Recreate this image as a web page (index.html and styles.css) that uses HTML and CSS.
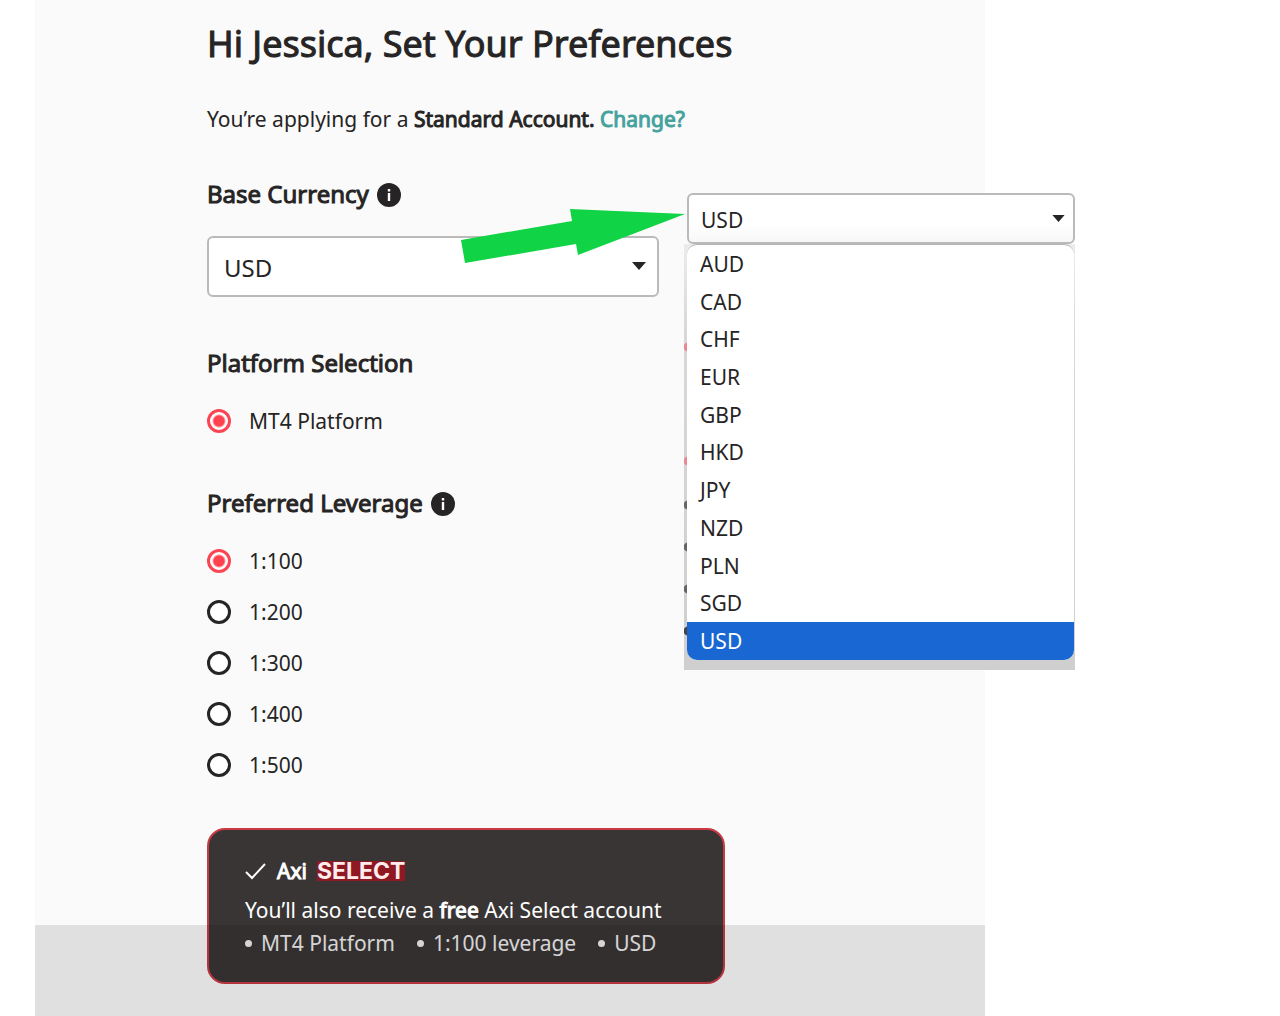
FILE: index.html
```html
<!DOCTYPE html>
<html lang="en">
<head>
    <meta charset="UTF-8">
    <meta name="viewport" content="width=device-width, initial-scale=1.0">
    <title>Set Your Preferences</title>
    <link rel="stylesheet" href="styles.css">
</head>
<body>

<main class="panel">
    <h1>Hi Jessica, Set Your Preferences</h1>
    <p class="intro">You’re applying for a <b>Standard Account.</b> <a href="#change">Change?</a></p>

    <form>
        <section class="currency">
            <h2>
                <label for="currency">Base Currency</label>
                <svg class="info" viewBox="0 0 24 24" aria-hidden="true">
                    <circle cx="12" cy="12" r="12"/>
                    <path d="M10.8 6h2.4v2.4h-2.4zM10.8 10h2.4v8h-2.4z"/>
                </svg>
            </h2>
            <div class="select">
                <select id="currency">
                    <option>USD</option>
                </select>
                <svg class="caret" viewBox="0 0 14 8" aria-hidden="true"><path d="M0 0h14L7 8z"/></svg>
            </div>

            <div class="dropdown">
                <div class="select small">
                    <select id="currencyOpen" aria-label="Currency">
                        <option>USD</option>
                    </select>
                    <svg class="caret" viewBox="0 0 14 8" aria-hidden="true"><path d="M0 0h14L7 8z"/></svg>
                </div>
                <div class="shade">
                    <ul class="options" role="listbox" aria-label="Currencies">
                        <li role="option">AUD</li>
                        <li role="option">CAD</li>
                        <li role="option">CHF</li>
                        <li role="option">EUR</li>
                        <li role="option">GBP</li>
                        <li role="option">HKD</li>
                        <li role="option">JPY</li>
                        <li role="option">NZD</li>
                        <li role="option">PLN</li>
                        <li role="option">SGD</li>
                        <li role="option" class="selected" aria-selected="true">USD</li>
                    </ul>
                </div>
            </div>

            <svg class="arrow" viewBox="0 0 224 54" aria-hidden="true">
                <path d="M0 31L111 12L109 0L224 5L117 46L115 35L4 54z"/>
            </svg>
        </section>

        <section>
            <h2>Platform Selection</h2>
            <div class="radios">
                <label><input type="radio" name="platform" checked> MT4 Platform</label>
            </div>
        </section>

        <section>
            <h2>
                Preferred Leverage
                <svg class="info" viewBox="0 0 24 24" aria-hidden="true">
                    <circle cx="12" cy="12" r="12"/>
                    <path d="M10.8 6h2.4v2.4h-2.4zM10.8 10h2.4v8h-2.4z"/>
                </svg>
            </h2>
            <div class="radios">
                <label><input type="radio" name="leverage" checked> 1:100</label>
                <label><input type="radio" name="leverage"> 1:200</label>
                <label><input type="radio" name="leverage"> 1:300</label>
                <label><input type="radio" name="leverage"> 1:400</label>
                <label><input type="radio" name="leverage"> 1:500</label>
            </div>
        </section>
    </form>

    <div class="card">
        <div class="card-title">
            <svg class="check" viewBox="0 0 22 18" aria-hidden="true"><path d="M1 10l6 6L20 2"/></svg>
            <b>Axi</b>
            <span class="brand">SELECT</span>
        </div>
        <p>You’ll also receive a <b>free</b> Axi Select account</p>
        <ul class="summary">
            <li>MT4 Platform</li>
            <li>1:100 leverage</li>
            <li>USD</li>
        </ul>
    </div>

    <div class="bottom-bar"></div>
</main>

</body>
</html>
```

FILE: styles.css
```css
* {
    box-sizing: border-box;
}
body {
    margin: 0;
    padding-left: 35px;
    background: #fff;
    color: #262424;
    font-family: "Noto Sans", sans-serif;
    font-size: 21px;
    line-height: 32px;
}
h1, h2, p, ul {
    margin: 0;
    padding: 0;
    font-weight: 400;
}
ul {
    list-style: none;
}
.panel {
    position: relative;
    max-width: 950px;
    min-height: 100vh;
    padding: 18px 24px 32px 172px;
    background: #fafafa;
}
h1 {
    font-size: 36px;
    line-height: 52px;
    -webkit-text-stroke: 1px;
}
h2 {
    display: flex;
    align-items: center;
    gap: 8px;
    margin-bottom: 24px;
    font-size: 24px;
    line-height: 36px;
    -webkit-text-stroke: 1px;
}
b, .intro a {
    font-weight: 400;
    -webkit-text-stroke: 1px;
}
.intro {
    margin-top: 33px;
}
.intro a {
    color: #45a29e;
    text-decoration: none;
}
section {
    margin-top: 48px;
}
.currency {
    position: relative;
    margin-top: 41px;
}
.info {
    width: 24px;
    height: 24px;
    margin-top: 2px;
    fill: #262424;
    -webkit-text-stroke: 0;
}
.info path {
    fill: #fff;
}

/* selects */
.select {
    position: relative;
    max-width: 452px;
}
.select select {
    display: block;
    width: 100%;
    height: 61px;
    padding: 2px 15px 0;
    appearance: none;
    border: 2px solid #bcb9b9;
    border-radius: 6px;
    background: #fff;
    color: #262424;
    font: 24px "Noto Sans", sans-serif;
}
.caret {
    position: absolute;
    top: 26px;
    right: 13px;
    width: 14px;
    height: 8px;
    fill: #262424;
}
.small select {
    height: 51px;
    padding: 2px 12px 0;
    background: linear-gradient(#fff 60%, #f7f7f7);
    font-size: 21px;
}
.small .caret {
    top: 22px;
    right: 10px;
    width: 13px;
    height: 7px;
}

/* open currency list */
.dropdown {
    position: absolute;
    top: 17px;
    left: 477px;
    width: 391px;
    padding-left: 3px;
}
/* the radios under the list show at its left edge */
.shade {
    margin-left: -3px;
    padding: 0 1px 10px 3px;
    background:
        radial-gradient(circle at 4px 103px, #e58a90 4px, transparent 5px),
        radial-gradient(circle at 4px 217px, #e58a90 4px, transparent 5px),
        radial-gradient(circle at 4px 261px, #666 4px, transparent 5px),
        radial-gradient(circle at 4px 303px, #666 4px, transparent 5px),
        radial-gradient(circle at 4px 345px, #666 4px, transparent 5px),
        radial-gradient(circle at 4px 387px, #444 4px, transparent 5px),
        linear-gradient(#ececec, #d8d8d8 20%, #cfcfcf);
}
.options {
    display: grid;
    grid-auto-rows: 1fr;
    height: 416px;
    overflow: hidden;
    border-top: 1px solid #b4b2b2;
    border-radius: 10px;
    background: #fff;
}
.options li {
    display: flex;
    align-items: center;
    padding-left: 13px;
}
.options .selected {
    background: #1967d2;
    color: #fff;
}
.arrow {
    position: absolute;
    top: 33px;
    left: 254px;
    width: 224px;
    height: 54px;
    fill: #10d345;
}

/* radios */
.radios {
    display: grid;
    justify-items: start;
    gap: 19px;
}
.radios label {
    display: flex;
    align-items: center;
    gap: 18px;
}
.radios input {
    width: 24px;
    height: 24px;
    margin: 0;
    appearance: none;
    border: 3px solid #262424;
    border-radius: 50%;
    background: #fff;
}
.radios input:checked {
    border-color: #fa4654;
    background: radial-gradient(circle, #ff424f 5px, #fff 7px);
}

/* Axi Select card */
.card {
    max-width: 518px;
    margin-top: 47px;
    padding: 25px 36px 23px;
    border: 2px solid #c93a45;
    border-radius: 18px;
    background: #393535;
    color: #fff;
}
.card-title {
    display: flex;
    align-items: center;
    margin-bottom: 7px;
}
.check {
    width: 22px;
    height: 18px;
    margin-right: 10px;
    fill: none;
    stroke: #fff;
    stroke-width: 2;
}
.brand {
    margin-left: 10px;
    background: #8f1822;
    color: #ffeced;
    font: 700 23px/20px Inter, sans-serif;
}
.summary {
    display: flex;
    gap: 22px;
    margin-top: 1px;
    color: #efeded;
}
.summary li {
    display: flex;
    align-items: center;
    gap: 9px;
}
.summary li::before {
    content: "";
    width: 7px;
    height: 7px;
    border-radius: 50%;
    background: #efeded;
}
.bottom-bar {
    position: absolute;
    right: 0;
    bottom: 0;
    left: 0;
    height: 91px;
    background: rgba(0, 0, 0, 0.1);
    pointer-events: none;
}
```
